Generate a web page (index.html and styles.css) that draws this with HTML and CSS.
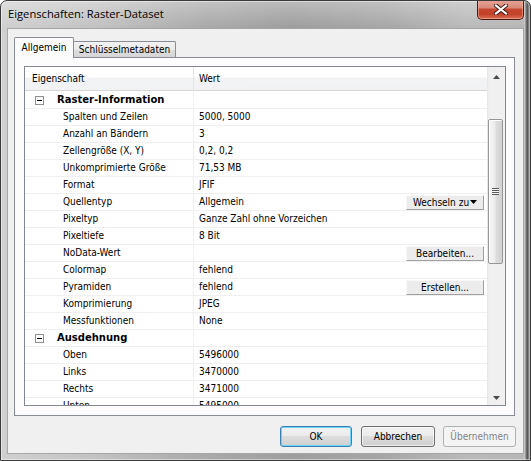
FILE: index.html
```html
<!DOCTYPE html>
<html lang="de">
  <head>
    <meta charset="UTF-8" />
    <title>Eigenschaften: Raster-Dataset</title>
    <link rel="stylesheet" href="styles.css">
  </head>
  <body>
    <div class="window">
      <div class="titlebar">
        <span class="titlebar__text">Eigenschaften: Raster-Dataset</span>
        <div class="close">
          <svg width="14" height="11" viewBox="0 0 14 11">
            <path d="M2 1.5 L12 9.5 M12 1.5 L2 9.5" stroke="#3a1410" stroke-width="4" stroke-linecap="square" />
            <path d="M2 1.5 L12 9.5 M12 1.5 L2 9.5" stroke="#fff" stroke-width="2.2" stroke-linecap="square" />
          </svg>
        </div>
      </div>

      <div class="client">
        <div class="tabs">
          <div class="tab tab--active">Allgemein</div>
          <div class="tab">Schlüsselmetadaten</div>
        </div>

        <div class="panel">
          <div class="grid">
            <div class="grid__body">
              <div class="grid__head">
                <div class="head__name">Eigenschaft</div>
                <div class="head__value">Wert</div>
              </div>
              <div class="grid__rows">
                <div class="row row--cat">
                  <div class="cell cell--name"><span class="toggle"></span>Raster-Information</div>
                  <div class="cell cell--value"></div>
                </div>
                <div class="row"><div class="cell cell--name">Spalten und Zeilen</div><div class="cell cell--value">5000, 5000</div></div>
                <div class="row"><div class="cell cell--name">Anzahl an Bändern</div><div class="cell cell--value">3</div></div>
                <div class="row"><div class="cell cell--name">Zellengröße (X, Y)</div><div class="cell cell--value">0,2, 0,2</div></div>
                <div class="row"><div class="cell cell--name">Unkomprimierte Größe</div><div class="cell cell--value">71,53 MB</div></div>
                <div class="row"><div class="cell cell--name">Format</div><div class="cell cell--value">JFIF</div></div>
                <div class="row">
                  <div class="cell cell--name">Quellentyp</div>
                  <div class="cell cell--value">Allgemein
                    <button class="cell-btn">Wechseln zu<svg class="cell-btn__arrow" width="7" height="4" viewBox="0 0 7 4"><path d="M0 0 H7 L3.5 4 Z" fill="#000" /></svg></button>
                  </div>
                </div>
                <div class="row"><div class="cell cell--name">Pixeltyp</div><div class="cell cell--value">Ganze Zahl ohne Vorzeichen</div></div>
                <div class="row"><div class="cell cell--name">Pixeltiefe</div><div class="cell cell--value">8 Bit</div></div>
                <div class="row">
                  <div class="cell cell--name">NoData-Wert</div>
                  <div class="cell cell--value"><span></span><button class="cell-btn">Bearbeiten...</button></div>
                </div>
                <div class="row"><div class="cell cell--name">Colormap</div><div class="cell cell--value">fehlend</div></div>
                <div class="row">
                  <div class="cell cell--name">Pyramiden</div>
                  <div class="cell cell--value">fehlend <button class="cell-btn">Erstellen...</button></div>
                </div>
                <div class="row"><div class="cell cell--name">Komprimierung</div><div class="cell cell--value">JPEG</div></div>
                <div class="row"><div class="cell cell--name">Messfunktionen</div><div class="cell cell--value">None</div></div>
                <div class="row row--cat">
                  <div class="cell cell--name"><span class="toggle"></span>Ausdehnung</div>
                  <div class="cell cell--value"></div>
                </div>
                <div class="row"><div class="cell cell--name">Oben</div><div class="cell cell--value">5496000</div></div>
                <div class="row"><div class="cell cell--name">Links</div><div class="cell cell--value">3470000</div></div>
                <div class="row"><div class="cell cell--name">Rechts</div><div class="cell cell--value">3471000</div></div>
                <div class="row"><div class="cell cell--name">Unten</div><div class="cell cell--value">5495000</div></div>
              </div>
            </div>

            <div class="scrollbar">
              <div class="scrollbar__arrow">
                <svg width="7" height="4" viewBox="0 0 7 4"><path d="M3.5 0 L7 4 H0 Z" fill="#4a4a4a" /></svg>
              </div>
              <div class="scrollbar__track">
                <div class="scrollbar__thumb">
                  <span class="grip"></span>
                </div>
              </div>
              <div class="scrollbar__arrow">
                <svg width="7" height="4" viewBox="0 0 7 4"><path d="M0 0 H7 L3.5 4 Z" fill="#4a4a4a" /></svg>
              </div>
            </div>
          </div>
        </div>

        <div class="actions">
          <button class="btn btn--default">OK</button>
          <button class="btn btn--cancel">Abbrechen</button>
          <button class="btn btn--disabled">Übernehmen</button>
        </div>
      </div>
    </div>
  </body>
</html>
```

FILE: styles.css
```css
* {
  margin: 0;
  padding: 0;
  box-sizing: border-box;
}

body {
  width: 531px;
  height: 461px;
  overflow: hidden;
  font-family: "DejaVu Sans Condensed", "DejaVu Sans", sans-serif;
  font-stretch: condensed;
  font-size: 10px;
  color: #000;
  background-color: #fff;
}

button {
  font: inherit;
  color: inherit;
}

/* window frame */
.window {
  width: 531px;
  height: 461px;
  border: 1px solid #3b3b3b;
  border-radius: 7px 7px 0 0;
  overflow: hidden;
  background:
    linear-gradient(to right, #dcdcdc 0, #8c8c8c 30%, #505050 55%, #8a8a8a 80%, #6a6a6a 100%) right top / 6px 100% no-repeat,
    linear-gradient(to bottom, rgba(255, 255, 255, 0.3), rgba(255, 255, 255, 0) 26px),
    linear-gradient(to right, #d0d0d0 0, #c2c2c2 18%, #aaaaaa 38%, #9e9e9e 55%, #a6a6a6 72%, #bababa 88%, #b6b6b6 100%);
  box-shadow: inset 0 0 0 1px rgba(255, 255, 255, 0.45);
}

.titlebar {
  height: 27px;
  display: flex;
  justify-content: space-between;
  align-items: flex-start;
}

.titlebar__text {
  margin: 5px 0 0 7px;
  font-family: "Open Sans", "Noto Sans", sans-serif;
  font-stretch: normal;
  font-size: 11.2px;
  line-height: 16px;
}

.close {
  width: 47px;
  height: 20px;
  margin: -1px 6px 0 0;
  border: 1px solid #4a1a14;
  border-top: 0;
  border-radius: 0 0 5px 5px;
  background: linear-gradient(#e7a697 0, #d88a7a 40%, #c5462f 50%, #c24128 75%, #dc7156 100%);
  box-shadow: inset 0 0 0 1px rgba(255, 190, 170, 0.5);

  display: flex;
  align-items: center;
  justify-content: center;
}

/* dialog client area */
.client {
  width: 517px;
  height: 426px;
  margin-left: 6px;
  padding: 8px 0 0 6px;
  border: 1px solid #a6a6a6;
  background-color: #f0f0f0;
}

.tabs {
  height: 20px;
  display: flex;
  align-items: flex-end;
}

.tab {
  width: 103px;
  height: 16px;
  margin-left: -1px;
  border: 1px solid #898c95;
  border-bottom: 0;
  border-radius: 2px 2px 0 0;
  background: linear-gradient(#f2f2f2 0, #ebebeb 50%, #dedede 51%, #d6d6d6 100%);
  line-height: 15px;
  text-align: center;
}

.tab--active {
  position: relative;
  z-index: 1;
  width: 60px;
  height: 21px;
  margin: 0 0 -1px 0;
  background: #fcfcfc;
  line-height: 19px;
}

.panel {
  width: 501px;
  height: 359px;
  padding: 8px 0 0 9px;
  border: 1px solid #898c95;
  background-color: #fcfcfc;
}

/* property grid */
.grid {
  width: 482px;
  height: 340px;
  border: 1px solid #828790;
  background-color: #fff;
  display: flex;
}

.grid__body {
  width: 462px;
  overflow: hidden;
}

.grid__head {
  height: 24px;
  display: flex;
  border-bottom: 1px solid #d5d5d5;
  background: linear-gradient(#fff 0, #fff 42%, #f2f3f5 50%, #f1f2f4 100%);
  line-height: 23px;
}

.head__name {
  width: 168px;
  padding-left: 7px;
}

.head__value {
  flex: 1;
  padding-left: 5px;
  border-left: 1px solid #e3e4e6;
}

.grid__rows {
  padding-top: 1px;
}

.row {
  height: 17px;
  display: flex;
  border-bottom: 1px solid #f0f0f0;
  line-height: 16px;
}

.cell--name {
  width: 168px;
  padding-left: 38px;
  white-space: nowrap;
}

.cell--value {
  flex: 1;
  padding: 0 3px 0 5px;
  border-left: 1px solid #f0f0f0;
  white-space: nowrap;

  display: flex;
  align-items: center;
  justify-content: space-between;
}

.row--cat .cell--name {
  padding-left: 10px;
  font-family: "DejaVu Sans", sans-serif;
  font-weight: bold;
  font-stretch: normal;
  display: flex;
  align-items: center;
  gap: 13px;
}

.toggle {
  position: relative;
  width: 9px;
  height: 9px;
  border: 1px solid #8f8f8f;
  background: #fff;
}

.toggle::after {
  content: '';
  position: absolute;
  left: 1px;
  top: 3px;
  width: 5px;
  height: 1px;
  background: #000;
}

.cell-btn {
  width: 78px;
  height: 15px;
  border: 1px solid;
  border-color: #f8f8f8 #a0a0a0 #a0a0a0 #f8f8f8;
  background-color: #ececec;
  line-height: 13px;
  text-align: center;

  display: flex;
  align-items: center;
  justify-content: center;
}

.cell-btn__arrow {
  margin-left: 1px;
}

/* scrollbar */
.scrollbar {
  width: 18px;
  display: flex;
  flex-direction: column;
  background: linear-gradient(to right, #e6e6e6 0, #f0f0f0 2px, #f0f0f0 100%);
}

.scrollbar__arrow {
  height: 17px;
  display: flex;
  align-items: center;
  justify-content: center;
  padding-top: 2px;
}

.scrollbar__track {
  flex: 1;
  padding: 35px 0 0 1px;
}

.scrollbar__thumb {
  width: 15px;
  height: 145px;
  border: 1px solid #979797;
  border-radius: 2px;
  background: linear-gradient(to right, #f7f7f7 0, #ececec 45%, #dcdcdc 55%, #d2d2d2 100%);
  box-shadow: inset 1px 1px 0 #fff;

  display: flex;
  align-items: center;
  justify-content: center;
}

.grip {
  width: 7px;
  height: 7px;
  background: repeating-linear-gradient(#5e5e5e 0, #5e5e5e 1px, #f4f4f4 1px, #f4f4f4 2px);
}

/* dialog buttons */
.actions {
  display: flex;
  justify-content: flex-end;
  padding: 10px 7px 0 0;
}

.btn {
  width: 73px;
  height: 21px;
  margin-left: 8px;
  border: 1px solid #707070;
  border-radius: 3px;
  background: linear-gradient(#f2f2f2 0, #ebebeb 45%, #dddddd 50%, #cfcfcf 100%);
  box-shadow: inset 0 0 0 1px rgba(255, 255, 255, 0.6);
}

.btn--default {
  width: 72px;
  border-color: #3c7fb1;
  box-shadow: inset 0 0 0 1px #68d4fb;
}

.btn--cancel {
  width: 74px;
  margin-left: 9px;
}

.btn--disabled {
  border-color: #adb2b5;
  background: #f4f4f4;
  color: #838383;
  box-shadow: none;
}
```
